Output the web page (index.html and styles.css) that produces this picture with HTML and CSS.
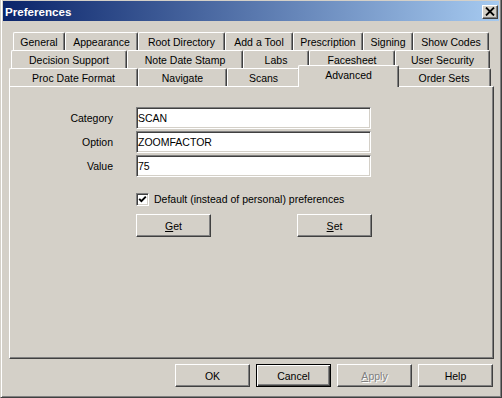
FILE: index.html
```html
<!DOCTYPE html>
<html lang="en">
<head>
    <meta charset="UTF-8">
    <title>Preferences</title>
    <link rel="stylesheet" href="styles.css">
</head>
<body>
    <div class="window">
        <!-- Title bar -->
        <div class="titlebar">
            <span class="title">Preferences</span>
            <button class="close-btn">
                <svg width="10" height="9" viewBox="0 0 10 9">
                    <path d="M1 0.5 L9 8.5 M9 0.5 L1 8.5" stroke="#000" stroke-width="1.8" fill="none"/>
                </svg>
            </button>
        </div>

        <div class="dialog">
            <!-- Tabs -->
            <div class="tabs">
                <div class="tab-row row-1">
                    <div class="tab">General</div>
                    <div class="tab">Appearance</div>
                    <div class="tab">Root Directory</div>
                    <div class="tab">Add a Tool</div>
                    <div class="tab">Prescription</div>
                    <div class="tab">Signing</div>
                    <div class="tab">Show Codes</div>
                </div>
                <div class="tab-row row-2">
                    <div class="tab">Decision Support</div>
                    <div class="tab">Note Date Stamp</div>
                    <div class="tab">Labs</div>
                    <div class="tab">Facesheet</div>
                    <div class="tab">User Security</div>
                </div>
                <div class="tab-row row-3">
                    <div class="tab">Proc Date Format</div>
                    <div class="tab">Navigate</div>
                    <div class="tab">Scans</div>
                    <div class="tab active">Advanced</div>
                    <div class="tab">Order Sets</div>
                </div>
            </div>

            <!-- Advanced page -->
            <div class="panel">
                <div class="form">
                    <label class="label" for="category">Category</label>
                    <input class="field" id="category" value="SCAN">
                    <label class="label" for="option">Option</label>
                    <input class="field" id="option" value="ZOOMFACTOR">
                    <label class="label" for="value">Value</label>
                    <input class="field" id="value" value="75">

                    <div class="check-row">
                        <span class="checkbox">
                            <svg width="9" height="9" viewBox="0 0 9 9">
                                <polyline points="1.2,3.8 3.4,6.2 7.8,1.6" stroke="#000" stroke-width="1.9" fill="none"/>
                            </svg>
                        </span>
                        <span>Default (instead of personal) preferences</span>
                    </div>

                    <div class="action-row">
                        <button class="btn"><u>G</u>et</button>
                        <button class="btn"><u>S</u>et</button>
                    </div>
                </div>
            </div>

            <!-- Dialog buttons -->
            <div class="footer">
                <button class="btn">OK</button>
                <button class="btn default">Cancel</button>
                <button class="btn disabled"><u>A</u>pply</button>
                <button class="btn">Help</button>
            </div>
        </div>
    </div>
</body>
</html>
```

FILE: styles.css
```css
/* Base */
body {
    margin: 0;
    font-family: "Liberation Sans", Arial, sans-serif;
    font-size: 10.5px;
    color: #000;
    background-color: #d4d0c8;
}

/* Window frame */
.window {
    width: 502px;
    height: 398px;
    box-sizing: border-box;
    background-color: #d4d0c8;
    border-left: 1px solid #d4d0c8;
    border-right: 1px solid #404040;
    border-bottom: 1px solid #404040;
    box-shadow: inset 1px 0 #fff, inset -1px -1px #808080;
    padding: 1px 2px 1px 2px;
}

/* Title bar */
.titlebar {
    height: 20px;
    display: flex;
    align-items: center;
    justify-content: space-between;
    padding: 0 1px 0 2px;
    background: linear-gradient(to right, #0a246a, #a6caf0);
}

.title {
    color: #fff;
    font-weight: bold;
    font-size: 11.6px;
}

.close-btn {
    width: 16px;
    height: 14px;
    padding: 0;
    margin-top: 1px;
    display: flex;
    align-items: center;
    justify-content: center;
    background-color: #d4d0c8;
    border: 1px solid;
    border-color: #fff #404040 #404040 #fff;
    box-shadow: inset -1px -1px #808080;
}

/* Dialog body */
.dialog {
    padding: 11px 5px 0 6px;
}

/* Tabs */
.tab-row {
    display: grid;
    grid-template-rows: 18px;
}

.row-1 {
    margin-left: 4px;
    grid-template-columns: 52px 73px 87px 68px 70px 50px 76px;
}

.row-2 {
    margin-left: 2px;
    grid-template-columns: 116px 116px 66px 86px 95px;
}

.row-3 {
    grid-template-columns: 129px 89px 73px 97px 94px;
}

.tab {
    display: flex;
    align-items: center;
    justify-content: center;
    box-sizing: border-box;
    background-color: #d4d0c8;
    border-top: 1px solid #fff;
    border-left: 1px solid #fff;
    border-right: 1px solid #404040;
    border-radius: 2px 2px 0 0;
    box-shadow: inset -1px 0 #808080;
    white-space: nowrap;
}

.tab.active {
    margin: -3px -2px -1px -2px;
    padding-bottom: 3px;
    z-index: 2;
}

/* Page panel */
.panel {
    height: 273px;
    box-sizing: border-box;
    border: 1px solid;
    border-color: #fff #404040 #404040 #fff;
    box-shadow: inset -1px -1px #808080;
    padding-top: 20px;
}

.form {
    display: grid;
    grid-template-columns: 103px 236px;
    grid-auto-rows: 22px;
    column-gap: 23px;
    row-gap: 2px;
}

.label {
    text-align: right;
    align-self: center;
}

.field {
    grid-column: 2;
    width: 235px;
    height: 22px;
    box-sizing: border-box;
    margin: 0;
    padding: 0 1px;
    font-family: "Liberation Sans", Arial, sans-serif;
    font-size: 10.5px;
    color: #000;
    background-color: #fff;
    border: 1px solid;
    border-color: #808080 #fff #fff #808080;
    box-shadow: inset 1px 1px #404040, inset -1px -1px #d4d0c8;
    outline: none;
}

.check-row {
    grid-column: 2;
    margin-top: 12px;
    display: flex;
    align-items: center;
    gap: 5px;
    height: 16px;
}

.checkbox {
    width: 13px;
    height: 13px;
    box-sizing: border-box;
    display: flex;
    align-items: center;
    justify-content: center;
    background-color: #fff;
    border: 1px solid;
    border-color: #808080 #fff #fff #808080;
    box-shadow: inset 1px 1px #404040, inset -1px -1px #d4d0c8;
}

.action-row {
    grid-column: 2;
    margin-top: 11px;
    display: flex;
    justify-content: space-between;
    height: 23px;
}

/* Buttons */
.btn {
    width: 75px;
    height: 23px;
    padding: 0;
    font-family: "Liberation Sans", Arial, sans-serif;
    font-size: 10.5px;
    color: #000;
    background-color: #d4d0c8;
    border: 1px solid;
    border-color: #fff #404040 #404040 #fff;
    box-shadow: inset -1px -1px #808080;
}

.btn.default {
    border-color: #000;
    box-shadow: inset 1px 1px #fff, inset -1px -1px #404040, inset -2px -2px #808080;
}

.btn.disabled {
    color: #808080;
    text-shadow: 1px 1px #fff;
}

.footer {
    display: flex;
    justify-content: flex-end;
    gap: 6px;
    padding: 5px 1px 0 0;
}
```
